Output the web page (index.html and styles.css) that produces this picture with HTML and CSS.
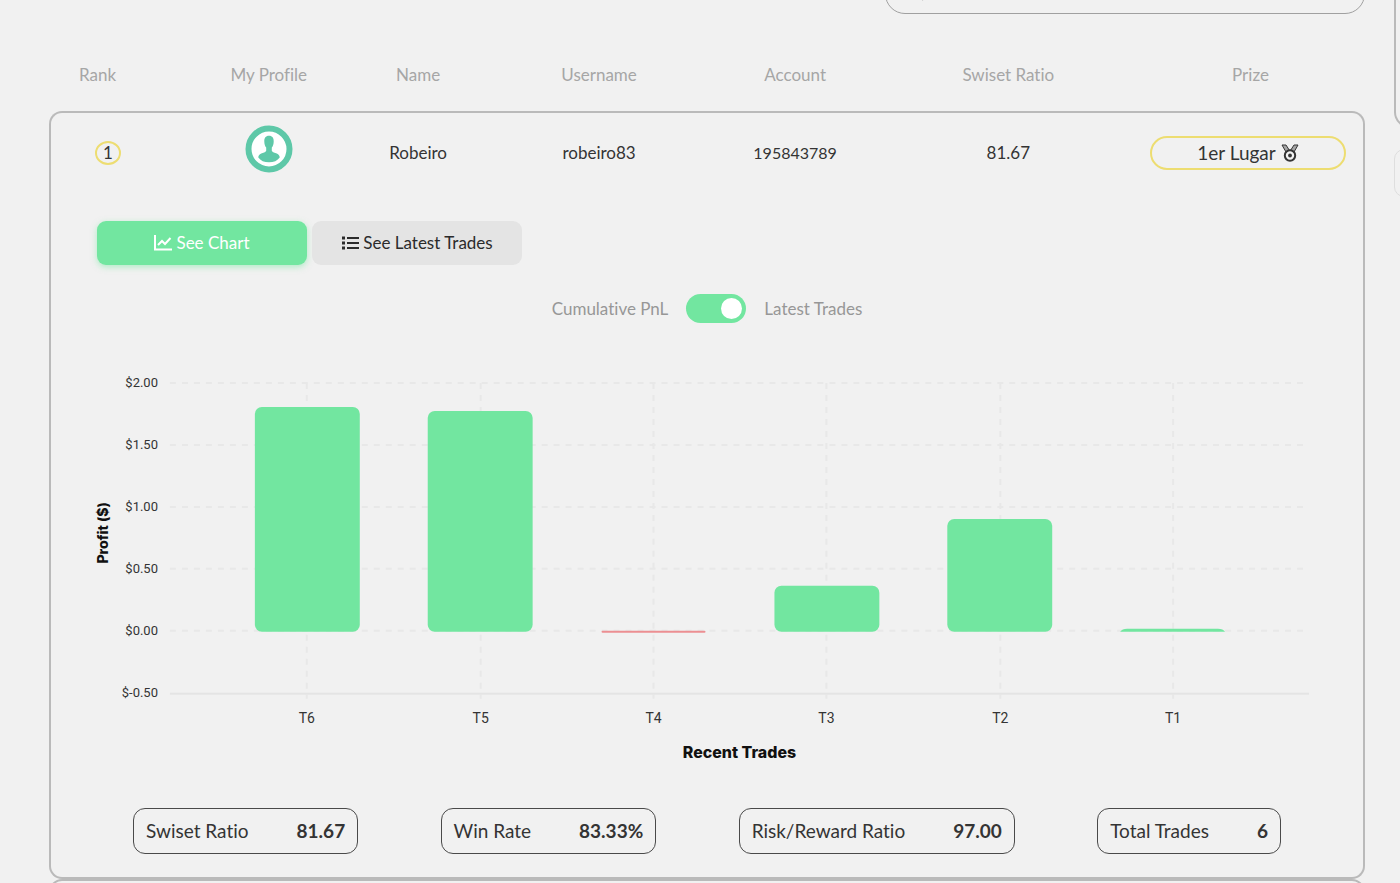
FILE: index.html
```html
<!DOCTYPE html>
<html lang="en">
<head>
<meta charset="utf-8">
<title>Leaderboard</title>
<link rel="stylesheet" href="styles.css">
</head>
<body>
<div class="page">
  <main class="board">
    <div class="search-row">
      <label class="search">
        <svg class="search-icon" width="18" height="18" viewBox="0 0 18 18" aria-hidden="true"><circle cx="10" cy="7" r="6"/><path d="M6 12 2 17"/></svg>
        <input class="search-input" type="search" aria-label="Search">
      </label>
    </div>

    <table class="ranking">
      <colgroup>
        <col class="col-rank"><col class="col-profile"><col class="col-name"><col class="col-user"><col class="col-account"><col class="col-ratio"><col class="col-prize">
      </colgroup>
      <thead>
        <tr><th class="rank-head">Rank</th><th>My Profile</th><th>Name</th><th>Username</th><th>Account</th><th>Swiset Ratio</th><th>Prize</th></tr>
      </thead>
      <tbody>
        <tr class="entry">
          <td class="rank-cell"><span class="rank-badge">1</span></td>
          <td>
            <svg class="avatar" width="48" height="48" viewBox="0 0 48 48" role="img" aria-label="Profile">
              <circle class="avatar-ring" cx="24" cy="24" r="20.5"/>
              <path class="avatar-person" d="M24 10.800c-3.400 0-4.800 2.300-4.700 5.600.1 2.800.7 4.700 1.900 6v3.300c-.5 1.600-3.200 2-5 2.800-1.900.9-2.900 2.200-2.900 3.900 2.200 3.200 6 4.900 10.700 4.900s8.500-1.700 10.700-4.900c0-1.700-1-3-2.900-3.900-1.800-.8-4.500-1.200-5-2.800v-3.300c1.200-1.300 1.800-3.200 1.900-6 .1-3.300-1.300-5.600-4.700-5.600z"/>
            </svg>
          </td>
          <td>Robeiro</td>
          <td>robeiro83</td>
          <td class="account">195843789</td>
          <td>81.67</td>
          <td class="prize-cell">
            <span class="prize">1er Lugar
              <svg class="medal" width="18" height="18" viewBox="0 0 18 18" aria-hidden="true"><path d="M1 1h4l3.300 5.200L5 8zM17 1h-4L9.700 6.200 13 8z"/><circle cx="9" cy="11.500" r="5.200"/><circle class="medal-dot" cx="9" cy="11.500" r="1.900"/></svg>
            </span>
          </td>
        </tr>
        <tr class="details">
          <td colspan="7">
            <div class="tabs">
              <button class="tab tab-active" type="button">
                <svg width="18" height="16" viewBox="0 0 18 16" aria-hidden="true"><path d="M1 0v14.500h17M4 10l4-4 3 3 5.500-6"/></svg>
                See Chart
              </button>
              <button class="tab" type="button">
                <svg width="18" height="16" viewBox="0 0 18 16" aria-hidden="true"><path d="M6 3h12M6 8h12M6 13h12"/><path class="bullets" d="M1 3h3M1 8h3M1 13h3"/></svg>
                See Latest Trades
              </button>
            </div>

            <label class="mode">
              <span>Cumulative PnL</span>
              <input class="switch" type="checkbox" role="switch" checked>
              <span>Latest Trades</span>
            </label>

            <svg class="chart" viewBox="0 0 1221 400" role="img" aria-label="Profit of recent trades">
              <g class="grid">
                <path d="M73 13H1211M73 75H1211M73 137H1211M73 199H1211M73 261H1211"/>
                <path d="M210 13V329M384 13V329M557 13V329M730 13V329M904 13V329M1077 13V329"/>
              </g>
              <path class="axis" d="M73 324H1213"/>
              <g class="bars">
                <rect x="158" y="37" width="105" height="225" rx="7"/>
                <rect x="331" y="41" width="105" height="221" rx="7"/>
                <rect x="678" y="216" width="105" height="46" rx="7"/>
                <rect x="851" y="149" width="105" height="113" rx="7"/>
                <path d="M1024 262q2-3 7-3h91q5 0 7 3z"/>
                <rect class="loss" x="505" y="261" width="104" height="2" rx="1"/>
              </g>
              <g class="ticks ticks-y">
                <text x="61" y="17">$2.00</text><text x="61" y="79">$1.50</text><text x="61" y="141">$1.00</text><text x="61" y="203">$0.50</text><text x="61" y="265">$0.00</text><text x="61" y="327">$-0.50</text>
              </g>
              <g class="ticks ticks-x">
                <text x="210" y="353">T6</text><text x="384" y="353">T5</text><text x="557" y="353">T4</text><text x="730" y="353">T3</text><text x="904" y="353">T2</text><text x="1077" y="353">T1</text>
              </g>
              <text class="axis-title" x="643" y="388">Recent Trades</text>
              <text class="axis-title axis-title-y" transform="translate(11 163) rotate(-90)">Profit ($)</text>
            </svg>

            <dl class="stats">
              <div class="stat"><dt>Swiset Ratio</dt><dd>81.67</dd></div>
              <div class="stat"><dt>Win Rate</dt><dd>83.33%</dd></div>
              <div class="stat"><dt>Risk/Reward Ratio</dt><dd>97.00</dd></div>
              <div class="stat"><dt>Total Trades</dt><dd>6</dd></div>
            </dl>
          </td>
        </tr>
      </tbody>
    </table>
    <div class="next-entry"></div>
  </main>
  <aside class="side">
    <div class="side-card"></div>
    <div class="side-item"></div>
  </aside>
</div>
</body>
</html>
```
FILE: styles.css
```css
* { box-sizing: border-box; }

body {
  margin: 0;
  background: #f1f1f1;
  color: #343434;
  font-family: Lato, "Open Sans", sans-serif;
  font-size: 17px;
  font-variant-ligatures: none;
  line-height: 24px;
}

.page {
  display: flex;
  gap: 29px;
  height: 100vh;
  padding-left: 49px;
  overflow: hidden;
}

.board { flex: 1; min-width: 0; }

.search-row {
  display: flex;
  justify-content: flex-end;
  align-items: flex-end;
  height: 14px;
}

.search {
  display: flex;
  flex: none;
  align-items: center;
  gap: 10px;
  width: 480px;
  height: 44px;
  padding: 0 34px;
  border: 1px solid #a0a0a0;
  border-radius: 20px;
}

.search-icon { fill: none; stroke: #8f8f8f; stroke-width: 2; }
.search-input { flex: 1; border: 0; outline: 0; background: transparent; font: inherit; }

.ranking {
  width: 100%;
  table-layout: fixed;
  border-spacing: 0;
  text-align: center;
}

.col-rank { width: 10.7%; }
.col-profile { width: 12%; }
.col-name { width: 10.7%; }
.col-user { width: 16.8%; }
.col-account { width: 13%; }
.col-ratio { width: 19.4%; }
.col-prize { width: 17.4%; }

th {
  height: 97px;
  padding: 24px 0 0;
  color: #a6a6a6;
  font-weight: 400;
}

td { padding: 0; }
.rank-head { padding-left: 30px; text-align: left; }

.entry td {
  height: 81px;
  border-top: 2px solid #bababa;
}
.entry td:first-child { border-left: 2px solid #bababa; border-top-left-radius: 13px; }
.entry td:last-child { border-right: 2px solid #bababa; border-top-right-radius: 13px; }

.rank-cell { padding-left: 44px; text-align: left; }
.rank-badge {
  display: block;
  width: 26px;
  height: 24px;
  border: 2px solid #eddd71;
  border-radius: 50%;
  line-height: 20px;
  text-align: center;
}

.avatar { display: block; margin: 0 auto 8px; }
.avatar-ring { fill: #fff; stroke: #5ec8a8; stroke-width: 6; }
.avatar-person { fill: #5ec8a8; }

.account { font-size: 16px; }

.prize-cell { padding: 0 17px 0 14px; }
.prize {
  display: flex;
  justify-content: center;
  align-items: center;
  gap: 5px;
  height: 34px;
  border: 2px solid #eddd71;
  border-radius: 17px;
  font-size: 19px;
}
.medal { fill: none; stroke: #343434; stroke-width: 2; }
.medal path { stroke-width: 1; fill: #a4a4a4; }
.medal .medal-dot { fill: #343434; stroke: none; }

.details > td {
  padding: 29px 46px 23px;
  border: 2px solid #bababa;
  border-top: 0;
  border-radius: 0 0 13px 13px;
}

.tabs { display: flex; gap: 5px; }
.tab {
  display: flex;
  justify-content: center;
  align-items: center;
  gap: 4px;
  width: 210px;
  height: 44px;
  padding: 0;
  border: 0;
  border-radius: 9px;
  background: #e4e4e4;
  color: #2b2b2b;
  font: inherit;
}
.tab svg { fill: none; stroke: currentColor; stroke-width: 2; }
.tab .bullets { stroke-width: 3; }
.tab-active {
  background: #72e6a0;
  color: #fff;
  box-shadow: 0 2px 6px #72e6a088;
}

.mode {
  display: flex;
  justify-content: center;
  align-items: center;
  gap: 18px;
  margin-top: 29px;
  color: #979797;
}
.switch {
  appearance: none;
  display: flex;
  justify-content: flex-end;
  width: 60px;
  height: 29px;
  margin: 0;
  padding: 4px;
  border-radius: 15px;
  background: #72e6a0;
}
.switch::before {
  content: "";
  width: 21px;
  border-radius: 50%;
  background: #fff;
}
.switch:not(:checked) { justify-content: flex-start; background: #c8c8c8; }

.chart { display: block; width: 100%; margin-top: 47px; overflow: visible; }
.grid { fill: none; stroke: #e8e8e8; stroke-width: 2; stroke-dasharray: 6 6; }
.axis { stroke: #e4e4e4; stroke-width: 2; }
.bars { fill: #72e6a0; }
.loss { fill: #ec8f92; }
.ticks { fill: #343434; font-family: Roboto, sans-serif; font-size: 13px; }
.ticks-y { text-anchor: end; }
.ticks-x { text-anchor: middle; font-size: 14px; }
.axis-title {
  fill: #111;
  font-family: Inter, sans-serif;
  font-size: 16px;
  font-weight: 800;
  text-anchor: middle;
}
.axis-title-y { font-size: 14px; }

.stats {
  display: flex;
  justify-content: space-between;
  margin: 38px 0 0;
  padding: 0 36px;
  font-size: 19px;
}
.stat {
  display: flex;
  align-items: center;
  gap: 48px;
  height: 46px;
  padding: 0 12px;
  border: 1px solid #4a4a4a;
  border-radius: 12px;
}
.stat dd { margin: 0; font-weight: 700; }

.next-entry {
  height: 80px;
  border: 2px solid #bababa;
  border-radius: 13px;
}

.side { flex: none; width: 320px; margin-right: -314px; }
.side-card {
  height: 128px;
  border: 2px solid #bababa;
  border-top: 0;
  border-radius: 0 0 16px 16px;
}
.side-item {
  height: 48px;
  margin-top: 21px;
  border: 1px solid #dedede;
  border-radius: 10px;
}
```
